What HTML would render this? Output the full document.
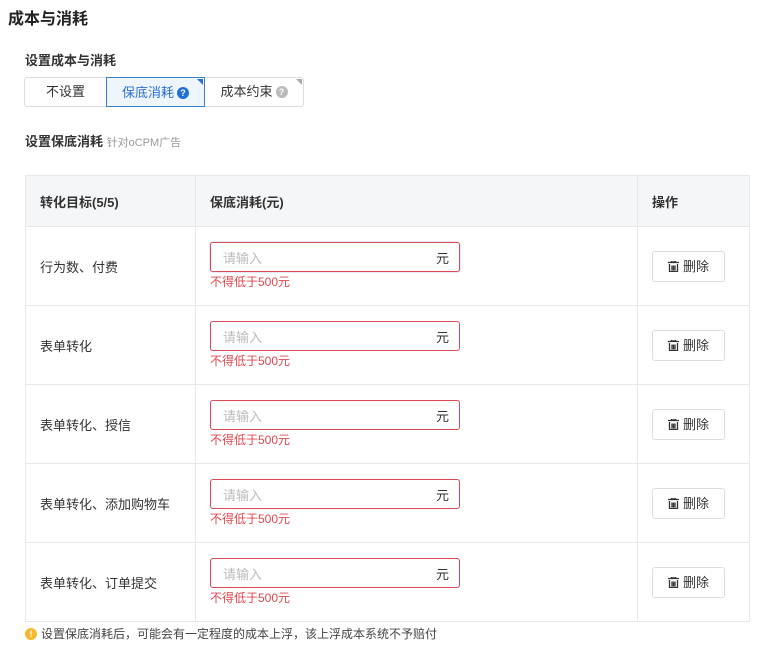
<!DOCTYPE html>
<html><head><meta charset="utf-8"><style>
*{box-sizing:border-box;margin:0;padding:0}
body{width:763px;height:651px;background:#fff;font-family:"Liberation Sans","Noto Sans CJK SC",sans-serif;color:#333;position:relative;overflow:hidden}
.a{position:absolute}
.title{left:8px;top:5px;font-size:16px;font-weight:bold;color:#222}
.sub{left:25px;top:50px;font-size:13px;font-weight:bold;color:#333}
.seg{left:24px;top:77px;height:30px;display:flex;border:1px solid #ddd;border-radius:3px}
.seg div{height:28px;line-height:28px;font-size:13px;text-align:center;position:relative}
.q{display:inline-block;width:12px;height:12px;border-radius:50%;color:#fff;font-size:9px;line-height:12px;text-align:center;font-weight:bold;vertical-align:1px;margin-left:3px}
.tri{position:absolute;right:1px;top:1px;width:0;height:0;border-left:6px solid transparent;border-top:6px solid #2b6fd6}
table{position:absolute;left:25px;top:175px;width:725px;border-collapse:collapse;font-size:13px}
td,th{border:1px solid #e8e8e8;text-align:left;padding:0 0 0 14px}
th{height:51px;background:#f5f6f8;font-weight:bold;color:#333}
td{height:79px;vertical-align:top}
.inp{margin-top:15px;width:250px;height:30px;border:1px solid #d94a52;border-radius:3px;display:flex;justify-content:space-between;align-items:center;padding:0 10px 0 12px;font-size:13px}
.err{color:#e0474f;font-size:12px;margin-top:1px}
.btn{margin-top:24px;width:73px;height:31px;border:1px solid #ddd;border-radius:3px;font-size:13px;line-height:29px;text-align:center;color:#333}
.btn svg{vertical-align:-1px;margin-right:4px}
</style></head><body>
<div class="a title">成本与消耗</div>
<div class="a sub">设置成本与消耗</div>
<div class="a seg">
<div style="width:81px;color:#333">不设置</div>
<div style="width:99px;border:1px solid #3b7fd8;background:#eef5fd;color:#2b6fd6;margin-top:-1px;height:30px;line-height:30px">保底消耗<span class="q" style="background:#1f6fd6">?</span><span class="tri"></span></div>
<div style="width:98px;color:#333">成本约束<span class="q" style="background:#bbb">?</span><span class="tri" style="border-top-color:#aaa"></span></div>
</div>
<div class="a" style="left:25px;top:131px;font-size:13px;font-weight:bold">设置保底消耗 <span style="font-weight:normal;font-size:11px;color:#999">针对oCPM广告</span></div>
<table>
<tr><th style="width:170px">转化目标(5/5)</th><th style="width:442px">保底消耗(元)</th><th>操作</th></tr>
<tr><td style="vertical-align:middle">行为数、付费</td><td><div class="inp" style="box-shadow:0 0 0 1px #e6eaf7"><span style="color:#bbb">请输入</span><span>元</span></div><div class="err">不得低于500元</div></td><td><div class="btn"><svg width="11" height="11" viewBox="0 0 11 11"><path d="M0 1.5h11M3.5 1.5V0h4v1.5M1.5 3v7.5h8V3M4 4.5v5M5.5 4.5v5M7 4.5v5" stroke="#333" stroke-width="1.3" fill="none"/></svg>删除</div></td></tr>
<tr><td style="vertical-align:middle">表单转化</td><td><div class="inp"><span style="color:#bbb">请输入</span><span>元</span></div><div class="err">不得低于500元</div></td><td><div class="btn"><svg width="11" height="11" viewBox="0 0 11 11"><path d="M0 1.5h11M3.5 1.5V0h4v1.5M1.5 3v7.5h8V3M4 4.5v5M5.5 4.5v5M7 4.5v5" stroke="#333" stroke-width="1.3" fill="none"/></svg>删除</div></td></tr>
<tr><td style="vertical-align:middle">表单转化、授信</td><td><div class="inp"><span style="color:#bbb">请输入</span><span>元</span></div><div class="err">不得低于500元</div></td><td><div class="btn"><svg width="11" height="11" viewBox="0 0 11 11"><path d="M0 1.5h11M3.5 1.5V0h4v1.5M1.5 3v7.5h8V3M4 4.5v5M5.5 4.5v5M7 4.5v5" stroke="#333" stroke-width="1.3" fill="none"/></svg>删除</div></td></tr>
<tr><td style="vertical-align:middle">表单转化、添加购物车</td><td><div class="inp"><span style="color:#bbb">请输入</span><span>元</span></div><div class="err">不得低于500元</div></td><td><div class="btn"><svg width="11" height="11" viewBox="0 0 11 11"><path d="M0 1.5h11M3.5 1.5V0h4v1.5M1.5 3v7.5h8V3M4 4.5v5M5.5 4.5v5M7 4.5v5" stroke="#333" stroke-width="1.3" fill="none"/></svg>删除</div></td></tr>
<tr><td style="vertical-align:middle">表单转化、订单提交</td><td><div class="inp"><span style="color:#bbb">请输入</span><span>元</span></div><div class="err">不得低于500元</div></td><td><div class="btn"><svg width="11" height="11" viewBox="0 0 11 11"><path d="M0 1.5h11M3.5 1.5V0h4v1.5M1.5 3v7.5h8V3M4 4.5v5M5.5 4.5v5M7 4.5v5" stroke="#333" stroke-width="1.3" fill="none"/></svg>删除</div></td></tr>
</table>
<div class="a" style="left:25px;top:625px;font-size:12px;color:#444"><span class="q" style="background:#f5b82e;margin:0 4px 0 0">!</span>设置保底消耗后，可能会有一定程度的成本上浮，该上浮成本系统不予赔付</div>
</body></html>
